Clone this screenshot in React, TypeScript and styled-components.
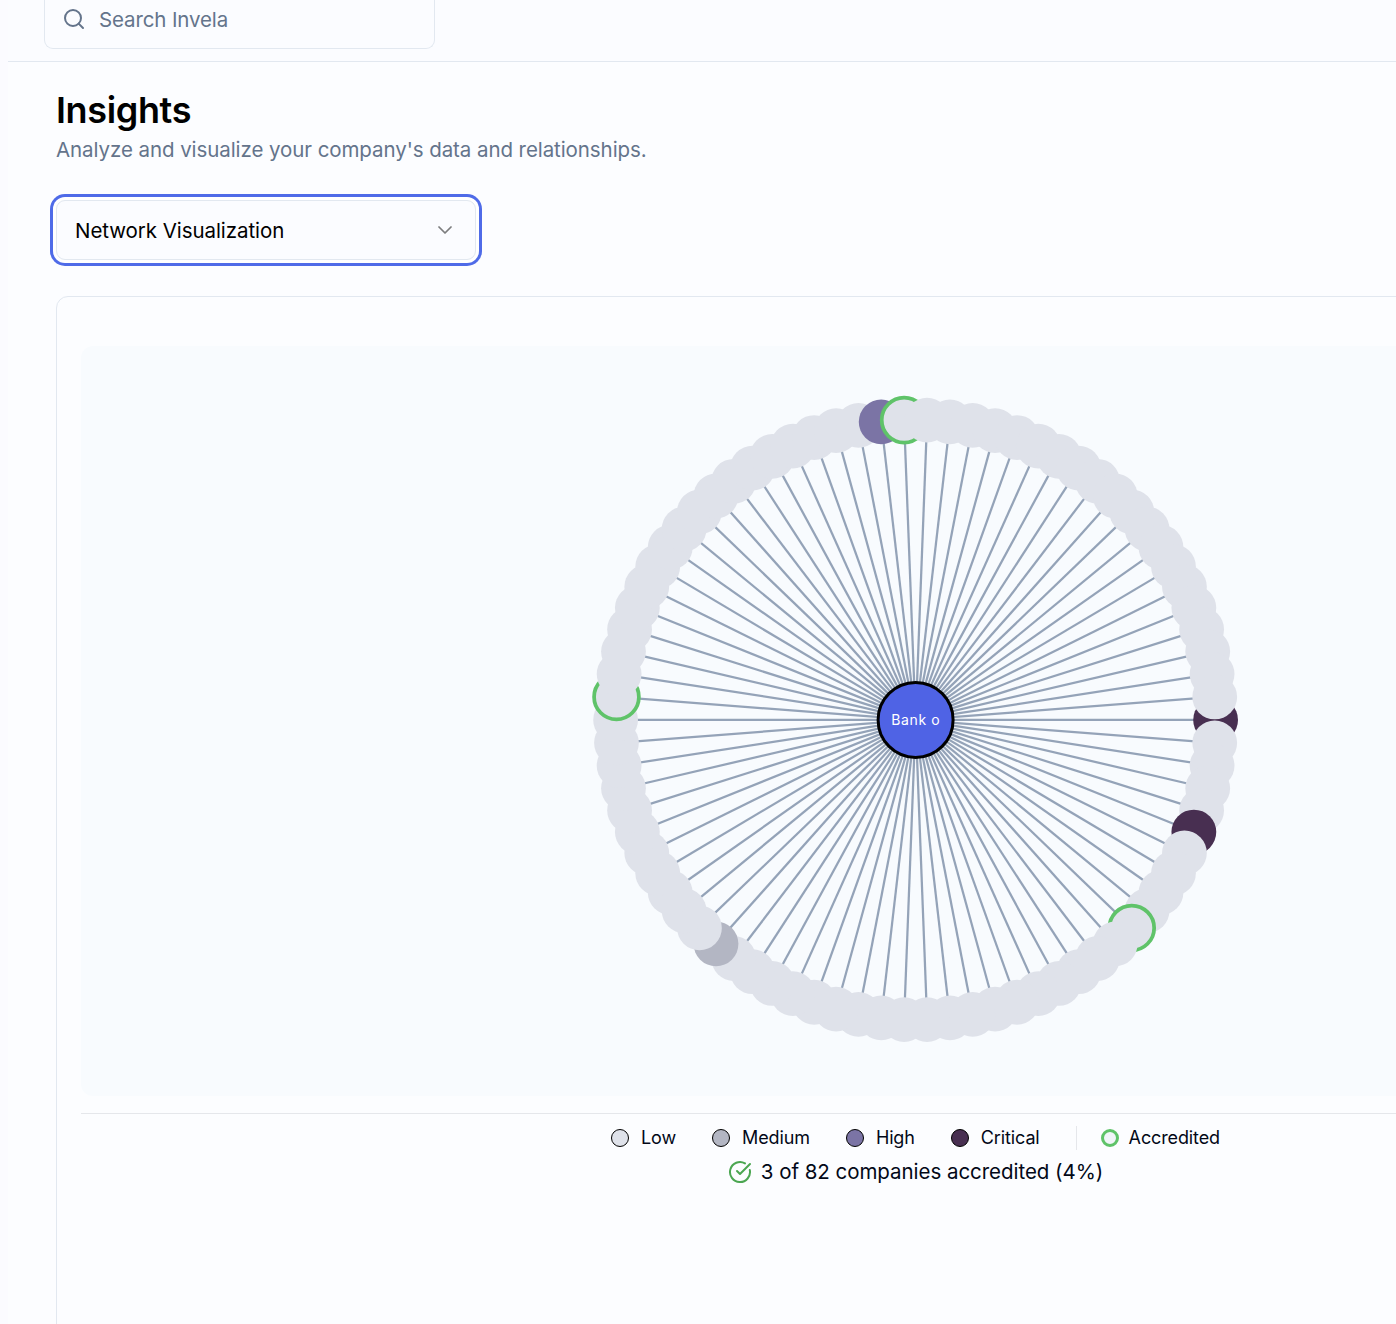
import React from 'react';
import styled, { createGlobalStyle } from 'styled-components';
import { ChevronDown, CircleCheckBig, Search } from 'lucide-react';

const GlobalStyle = createGlobalStyle`
  *, *::before, *::after { box-sizing: border-box; }
  html, body { margin: 0; padding: 0; }
  body {
    background: #fbfbff;
    overflow: hidden;
    font-family: Inter, "Liberation Sans", sans-serif;
  }
`;

const Viewport = styled.div`
  height: 1324px;
  overflow: hidden;
  padding-left: 8px;
`;

const Page = styled.div`
  width: 1815px;
  min-height: 1324px;
  background: #fcfdff;
`;

const TopBar = styled.header`
  height: 62px;
  padding-left: 36px;
  background: #fbfcff;
  border-bottom: 1px solid #e2e8f0;
`;

const SearchField = styled.label`
  display: flex;
  align-items: center;
  width: 391px;
  height: 49px;
  padding: 0 17px 10px;
  gap: 13px;
  border: 1px solid #e2e8f0;
  border-top: 0;
  border-radius: 0 0 9px 9px;
  color: #64748b;
`;

const SearchText = styled.span`
  padding-top: 1px;
  font-size: 20.5px;
  line-height: 30px;
  letter-spacing: -0.12px;
`;

const Content = styled.main`
  padding: 26px 48px 0;
`;

const Title = styled.h1`
  margin: 0;
  font-size: 36px;
  line-height: 44px;
  font-weight: 600;
  letter-spacing: -0.36px;
  color: #000;
`;

const Subtitle = styled.p`
  margin: 3px 0 0;
  font-size: 20.5px;
  line-height: 30px;
  letter-spacing: -0.075px;
  color: #64748b;
`;

const Select = styled.button`
  display: flex;
  align-items: center;
  justify-content: space-between;
  width: 420px;
  height: 60px;
  margin: 35px 0 0;
  padding: 0 18px;
  border: 1px solid #e2e8f0;
  border-radius: 9px;
  background: #fbfcff;
  box-shadow: 0 0 0 3px #fff, 0 0 0 6px #4f6be8;
  font: 400 20.5px/30px Inter, sans-serif;
  letter-spacing: -0.06px;
  color: #000;
`;

const SelectValue = styled.span`
  padding-top: 2px;
`;

const Chevron = styled(ChevronDown)`
  opacity: 0.5;
`;

const Card = styled.section`
  height: 1100px;
  margin-top: 36px;
  padding: 49px 24px 0;
  border: 1px solid #e2e8f0;
  border-radius: 12px;
`;

const ChartPanel = styled.div`
  display: flex;
  justify-content: center;
  height: 750px;
  border-radius: 12px;
  background: #f8fbfe;
`;

const Chart = styled.svg`
  display: block;
  width: 750px;
  height: 750px;
`;

const CenterLabel = styled.text`
  font-size: 14px;
  letter-spacing: 0.6px;
  fill: #fff;
  text-anchor: middle;
`;

const Footer = styled.div`
  display: flex;
  flex-direction: column;
  align-items: center;
  margin-top: 17px;
  padding-top: 12px;
  border-top: 1px solid #e5e7eb;
  color: #020817;
`;

const Legend = styled.div`
  display: flex;
  align-items: center;
  gap: 36px;
  height: 24px;
`;

const LegendItem = styled.div<{ $divided?: boolean }>`
  display: flex;
  align-items: center;
  gap: ${(p) => (p.$divided ? 10 : 12)}px;
  height: 24px;
  font-size: 18px;
  line-height: 24px;
  letter-spacing: -0.12px;
  padding-left: ${(p) => (p.$divided ? 24 : 0)}px;
  border-left: ${(p) => (p.$divided ? '1px solid #e5e7eb' : '0')};
`;

const Dot = styled.span<{ $fill: string; $ring?: string }>`
  width: 18px;
  height: 18px;
  border-radius: 50%;
  background: ${(p) => p.$fill};
  border: ${(p) => (p.$ring ? `3px solid ${p.$ring}` : '1px solid #000')};
`;

const Summary = styled.div`
  display: flex;
  align-items: center;
  gap: 9px;
  margin-top: 6px;
  font-size: 20.5px;
  line-height: 30px;
  letter-spacing: -0.04px;
`;

const SummaryText = styled.span`
  padding-top: 1px;
`;

const RISK = {
  low: '#dfe2ea',
  medium: '#b3b6c3',
  high: '#7b74a5',
  critical: '#482f51',
};
const ACCREDITED = '#5fc369';

const COUNT = 82;
const RADIUS = 300;
const CX = 374.6;
const CY = 373.9;

const riskByIndex: Record<number, string> = {
  0: RISK.critical,
  5: RISK.critical,
  30: RISK.medium,
  60: RISK.high,
};
const accredited = new Set([10, 42, 61]);

const companies = Array.from({ length: COUNT }, (_, i) => {
  const angle = (i / COUNT) * Math.PI * 2;
  return {
    x: CX + Math.cos(angle) * RADIUS,
    y: CY + Math.sin(angle) * RADIUS,
    fill: riskByIndex[i] ?? RISK.low,
    accredited: accredited.has(i),
  };
});

function NetworkChart() {
  return (
    <Chart viewBox="0 0 750 750">
      {companies.map((c, i) => (
        <line key={i} x1={CX} y1={CY} x2={c.x} y2={c.y} stroke="#94a3b8" strokeWidth={2.25} />
      ))}
      {companies.map((c, i) => (
        <circle
          key={i}
          cx={c.x}
          cy={c.y}
          r={22.4}
          fill={c.fill}
          stroke={c.accredited ? ACCREDITED : 'none'}
          strokeWidth={3.75}
        />
      ))}
      <circle cx={CX} cy={CY} r={37.5} fill="#4f63e5" stroke="#000" strokeWidth={3} />
      <CenterLabel x={CX + 0.2} y={CY + 5.1}>Bank o</CenterLabel>
    </Chart>
  );
}

export default function App() {
  return (
    <Viewport>
      <GlobalStyle />
      <Page>
        <TopBar>
          <SearchField>
            <Search size={24} strokeWidth={2} />
            <SearchText>Search Invela</SearchText>
          </SearchField>
        </TopBar>
        <Content>
          <Title>Insights</Title>
          <Subtitle>Analyze and visualize your company's data and relationships.</Subtitle>
          <Select type="button">
            <SelectValue>Network Visualization</SelectValue>
            <Chevron size={24} strokeWidth={1.75} />
          </Select>
          <Card>
            <ChartPanel>
              <NetworkChart />
            </ChartPanel>
            <Footer>
              <Legend>
                <LegendItem><Dot $fill={RISK.low} />Low</LegendItem>
                <LegendItem><Dot $fill={RISK.medium} />Medium</LegendItem>
                <LegendItem><Dot $fill={RISK.high} />High</LegendItem>
                <LegendItem><Dot $fill={RISK.critical} />Critical</LegendItem>
                <LegendItem $divided><Dot $fill="#f1f5f9" $ring={ACCREDITED} />Accredited</LegendItem>
              </Legend>
              <Summary>
                <CircleCheckBig size={24} strokeWidth={2} color="#4ba651" />
                <SummaryText>3 of 82 companies accredited (4%)</SummaryText>
              </Summary>
            </Footer>
          </Card>
        </Content>
      </Page>
    </Viewport>
  );
}
